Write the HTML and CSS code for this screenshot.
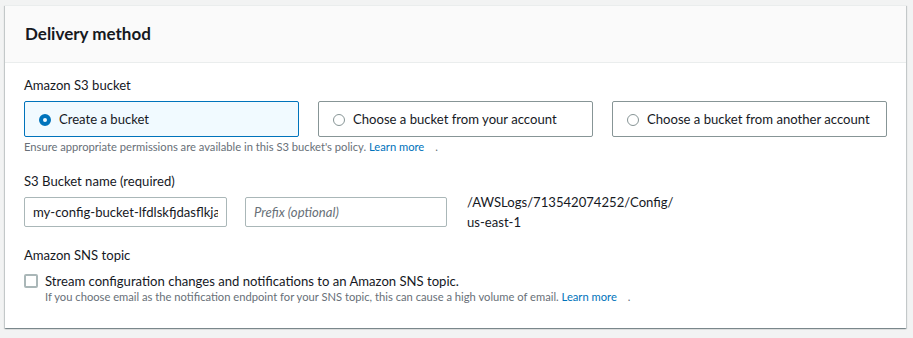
FILE: index.html
```html
<!DOCTYPE html>
<html lang="en">
<head>
  <meta charset="UTF-8">
  <title>Delivery method</title>
  <link rel="stylesheet" href="styles.css">
</head>
<body>

  <section class="panel">
    <header class="panel-header">
      <h2>Delivery method</h2>
    </header>

    <div class="panel-body">
      <div class="field">
        <div class="label">Amazon S3 bucket</div>
        <div class="tiles">
          <label class="tile selected">
            <span class="radio checked"></span>
            <span>Create a bucket</span>
          </label>
          <label class="tile">
            <span class="radio"></span>
            <span>Choose a bucket from your account</span>
          </label>
          <label class="tile">
            <span class="radio"></span>
            <span>Choose a bucket from another account</span>
          </label>
        </div>
        <div class="hint">Ensure appropriate permissions are available in this S3 bucket's policy. <a href="#">Learn more</a> <span class="ext"></span>.</div>
      </div>

      <div class="field bucket">
        <div class="label">S3 Bucket name (required)</div>
        <div class="bucket-row">
          <input class="text-input" type="text" value="my-config-bucket-lfdlskfjdasflkjasdf">
          <input class="text-input prefix" type="text" placeholder="Prefix (optional)">
          <div class="path">/AWSLogs/713542074252/Config/<br>us-east-1</div>
        </div>
      </div>

      <div class="field">
        <div class="label">Amazon SNS topic</div>
        <label class="check-row">
          <span class="checkbox"></span>
          <span>
            <span class="check-text">Stream configuration changes and notifications to an Amazon SNS topic.</span>
            <span class="hint">If you choose email as the notification endpoint for your SNS topic, this can cause a high volume of email. <a href="#">Learn more</a> <span class="ext"></span>.</span>
          </span>
        </label>
      </div>
    </div>
  </section>

</body>
</html>
```

FILE: styles.css
```css
body {
  margin: 0;
  padding: 5px 7px 10px 5px;
  background: #f2f3f3;
  font-family: 'Lato', 'Liberation Sans', sans-serif;
  font-size: 13.1px;
  color: #16191f;
}

.panel {
  background: white;
  border-top: 1px solid #eaeded;
  box-shadow: 0 1px 1px 0 rgba(0, 28, 36, 0.3), 1px 1px 1px 0 rgba(0, 28, 36, 0.15), -1px 1px 1px 0 rgba(0, 28, 36, 0.15);
}

.panel-header {
  background: #fafafa;
  border-bottom: 1px solid #eaeded;
  padding: 18px 20px;
}

.panel-header h2 {
  margin: 0;
  font-size: 17px;
  line-height: 20px;
  font-weight: bold;
}

.panel-body {
  padding: 12px 19px 23px 19px;
}

.field {
  margin-bottom: 16px;
}

.field.bucket {
  margin-bottom: 18px;
}

.field:last-child {
  margin-bottom: 0;
}

.label {
  line-height: 20px;
  margin-bottom: 6px;
}

.tiles {
  display: flex;
  gap: 19px;
}

.tile {
  width: 276px;
  height: 36px;
  box-sizing: border-box;
  border: 1px solid #879596;
  border-radius: 2px;
  display: flex;
  align-items: center;
  padding: 0 14px;
  gap: 8px;
  white-space: nowrap;
}

.tile.selected {
  background: #f1faff;
  border-color: #0073bb;
}

.radio {
  width: 12px;
  height: 12px;
  box-sizing: border-box;
  border: 1px solid #879596;
  border-radius: 50%;
  flex: none;
  margin-top: 2px;
}

.radio.checked {
  border: 4px solid #0073bb;
}

.hint {
  display: block;
  font-size: 11.2px;
  line-height: 16px;
  color: #687078;
  margin-top: 2px;
}

.hint a {
  color: #0073bb;
  text-decoration: none;
}

.ext {
  display: inline-block;
  width: 8px;
}

.bucket-row {
  display: flex;
  align-items: flex-start;
}

.text-input {
  width: 203px;
  height: 30px;
  box-sizing: border-box;
  border: 1px solid #aab7b8;
  border-radius: 2px;
  padding: 4px 8px;
  font: inherit;
  color: #16191f;
  margin-right: 18px;
}

.text-input.prefix {
  width: 202px;
  margin-right: 20px;
}

.text-input.prefix::placeholder {
  color: #687078;
  font-style: italic;
}

.path {
  line-height: 20px;
  margin-top: -5px;
  margin-bottom: -5px;
}

.check-row {
  display: flex;
  gap: 7px;
  align-items: flex-start;
  margin-top: 1px;
}

.checkbox {
  width: 14px;
  height: 14px;
  box-sizing: border-box;
  border: 2px solid #aab7b8;
  border-radius: 2px;
  flex: none;
  margin-top: 3px;
}

.check-text {
  display: block;
  line-height: 20px;
}

.check-row .hint {
  margin-top: -2px;
}
```
